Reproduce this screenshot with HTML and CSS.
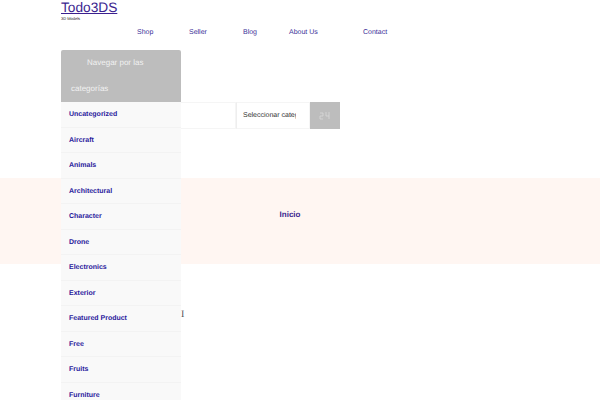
FILE: index.html
```html
<!DOCTYPE html>
<html lang="es">
<head>
    <title>Todo3DS</title>
    <meta charset="utf-8">
    <meta name="viewport" content="width=device-width, initial-scale=1.0">
    <link rel="stylesheet" href="styles.css">
</head>
<body>
    <div class="header">
        <div class="logo">
            <a class="site-title" href="#">Todo3DS</a>
            <p class="site-desc">3D Models</p>
        </div>
        <ul class="nav">
            <li class="nav-shop"><a href="#">Shop</a></li>
            <li class="nav-seller"><a href="#">Seller</a></li>
            <li class="nav-blog"><a href="#">Blog</a></li>
            <li class="nav-about"><a href="#">About Us</a></li>
            <li class="nav-contact"><a href="#">Contact</a></li>
        </ul>
    </div>

    <div class="top-bar">
        <div class="categories">
            <div class="categories-title">
                <span class="first-line">Navegar por las</span>
                <span>categorías</span>
            </div>
            <ul class="categories-list">
                <li><a href="#">Uncategorized</a></li>
                <li><a href="#">Aircraft</a></li>
                <li><a href="#">Animals</a></li>
                <li><a href="#">Architectural</a></li>
                <li><a href="#">Character</a></li>
                <li><a href="#">Drone</a></li>
                <li><a href="#">Electronics</a></li>
                <li><a href="#">Exterior</a></li>
                <li><a href="#">Featured Product</a></li>
                <li><a href="#">Free</a></li>
                <li><a href="#">Fruits</a></li>
                <li><a href="#">Furniture</a></li>
            </ul>
        </div>
        <form class="search">
            <div class="search-input"></div>
            <div class="search-select"><span>Seleccionar categoría</span></div>
            <div class="search-btn">
                <svg width="12" height="12" viewBox="0 0 12 12" fill="none" stroke="#d9d9d9" stroke-width="0.8">
                    <path d="M1 3h3v3H1v3h3M7 2v4h3M10 2v7"/>
                </svg>
            </div>
        </form>
    </div>

    <div class="banner">
        <a class="banner-link" href="#">Inicio</a>
    </div>

    <div class="content">
        <span class="caret">I</span>
    </div>
</body>
</html>
```

FILE: styles.css
```css
* { margin: 0; padding: 0; box-sizing: border-box; }
html, body { height: 400px; overflow: hidden; }
body {
    background-color: #fff; color: #222;
    font-family: 'Liberation Sans', Arial, sans-serif;
    text-rendering: geometricPrecision;
}
a { text-decoration: none; }
ul { list-style: none; }

.header { padding-left: 61px; height: 50px; }
.logo { height: 23px; }
.site-title {
    display: block; width: 56px; font-size: 13.7px; line-height: 15px;
    color: #3b1f8f; text-decoration: underline; text-underline-offset: 1px;
}
.site-desc { font-size: 4px; line-height: 5px; margin-top: 1px; color: #222; }

.nav { display: flex; font-size: 7px; line-height: 19px; padding-left: 76px; }
.nav a { color: #3a2f98; }
.nav li { flex: none; }
.nav-shop { width: 52px; }
.nav-seller { width: 54px; }
.nav-blog { width: 46px; }
.nav-about { width: 74px; }

.top-bar { display: flex; height: 128px; padding-left: 61px; position: relative; }

.categories { position: absolute; left: 61px; top: 0; width: 120px; z-index: 2; }
.categories-title {
    background: #bdbdbd; color: #f1f1f1; height: 52px; border-radius: 2px 2px 0 0;
    font-size: 8px; line-height: 26px; padding-left: 10px;
}
.categories-title span { display: block; }
.categories-title .first-line { padding-left: 16px; }
.categories-list li {
    height: 25.5px; background: #f9f9f9; border-bottom: 1px solid #f3f3f3;
    padding-left: 8px; font-size: 7px; font-weight: 700; line-height: 25.5px;
}
.categories-list a { color: #2a1a9c; }

.search { display: flex; height: 27px; margin: 52px 0 0 120px; }
.search-input { width: 55px; border: 1px solid #f5f5f5; border-left: 0; }
.search-select {
    width: 74px; padding-left: 6px; overflow: hidden; white-space: nowrap;
    border: 1px solid #f5f5f5; border-left-color: #eee;
    font-size: 7px; line-height: 25px; color: #333;
}
.search-select span { display: block; width: 53px; overflow: hidden; }
.search-btn {
    width: 30px; background: #bdbdbd;
    display: flex; justify-content: center; align-items: center;
}

.banner {
    height: 86px; background: #fff6f2;
    display: flex; justify-content: center; align-items: center;
    padding-bottom: 14px;
}
.banner-link { font-size: 8px; font-weight: 700; color: #3b1f8f; margin-left: -20px; }

.content { padding: 45px 0 0 181px; }
.caret { display: block; font-size: 10px; line-height: 12px; color: #555; font-family: 'Liberation Serif', serif; }
```
